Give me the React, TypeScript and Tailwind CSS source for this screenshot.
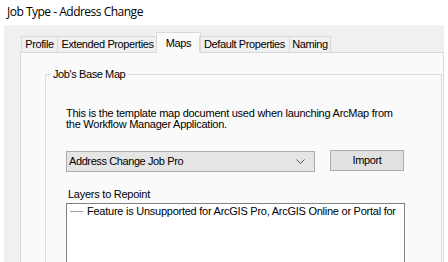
import React from "react";

const body = { fontFamily: '"Liberation Sans", Arial, sans-serif' };

export default function App() {
  const tabs = ["Profile", "Extended Properties", "Maps", "Default Properties", "Naming"];
  const widths = ["w-[37px]", "w-[101px]", "w-[45px]", "w-[91px]", "w-[42px]"];
  return (
    <div className="w-[448px] h-[262px] bg-white overflow-hidden flex flex-col text-black tracking-[-0.25px]" style={body}>
      <div
        className="h-[25px] shrink-0 pl-[7px] pt-[4px] text-[12px] leading-[16px] tracking-[-0.5px]"
        style={{ fontFamily: '"Open Sans", "Noto Sans", sans-serif' }}
      >
        Job Type - Address Change
      </div>
      <div className="ml-[4px] w-[440px] flex-1 bg-[#f0f0f0] pl-[16px] pt-[7px] flex flex-col">
        <div className="flex items-end h-[20px] pl-[1px] relative z-10 tracking-[-0.4px]">
          {tabs.map((t, i) =>
            t === "Maps" ? (
              <div
                key={t}
                className={`${widths[i]} -ml-[2px] -mr-[1px] h-[21px] mb-[-1px] bg-[#fafafa] border border-b-0 border-[#d9d9d9] text-[11px] whitespace-nowrap flex items-start justify-center pt-[2px]`}
              >
                {t}
              </div>
            ) : (
              <div
                key={t}
                className={`${widths[i]} h-[16px] border border-b-0 border-[#d9d9d9] text-[11px] whitespace-nowrap flex items-center justify-center -ml-[1px] first:ml-0`}
              >
                {t}
              </div>
            )
          )}
        </div>
        <div className="flex-1 border border-[#d9d9d9] bg-[#fafafa] pl-[24px] pt-[21px] pr-[1px]">
          <div className="relative border border-b-0 border-[#dcdcdc] h-[200px] pl-[20px] pt-[33px]">
            <div className="absolute -top-[8px] left-[5px] px-[2px] bg-[#fafafa] text-[11px] leading-[14px] tracking-[-0.4px]">Job's Base Map</div>
            <div className="text-[11px] leading-[11px] w-[336px]">
              This is the template map document used when launching ArcMap from the Workflow Manager Application.
            </div>
            <div className="flex items-start mt-[20px] gap-[15px]">
              <div className="w-[249px] h-[21px] mt-[1px] bg-[#e5e5e5] border border-[#acacac] flex items-center pl-[2px] pr-[5px] text-[11px] whitespace-nowrap tracking-[-0.4px]">
                <span className="flex-1">Address Change Job Pro</span>
                <svg width="9" height="6" viewBox="0 0 9 6" className="mr-[4px]">
                  <path d="M0.5 0.5 L4.5 4.5 L8.5 0.5" fill="none" stroke="#555" strokeWidth="1" />
                </svg>
              </div>
              <div className="w-[74px] h-[21px] bg-[#e1e1e1] border border-[#adadad] flex items-center justify-center text-[11px] tracking-[-0.4px]">
                Import
              </div>
            </div>
            <div className="mt-[16px] text-[11px] leading-[13px] pl-[2px] whitespace-nowrap">Layers to Repoint</div>
            <div className="w-[339px] h-[80px] bg-white border border-[#828282] mt-[2px] text-[11px]">
              <div className="flex items-center h-[14px] whitespace-nowrap">
                <div className="w-[13px] h-[1px] bg-[#a0a0a0] ml-[3px] mr-[4px]" />
                <span>Feature is Unsupported for ArcGIS Pro, ArcGIS Online or Portal for</span>
              </div>
            </div>
          </div>
        </div>
      </div>
    </div>
  );
}
